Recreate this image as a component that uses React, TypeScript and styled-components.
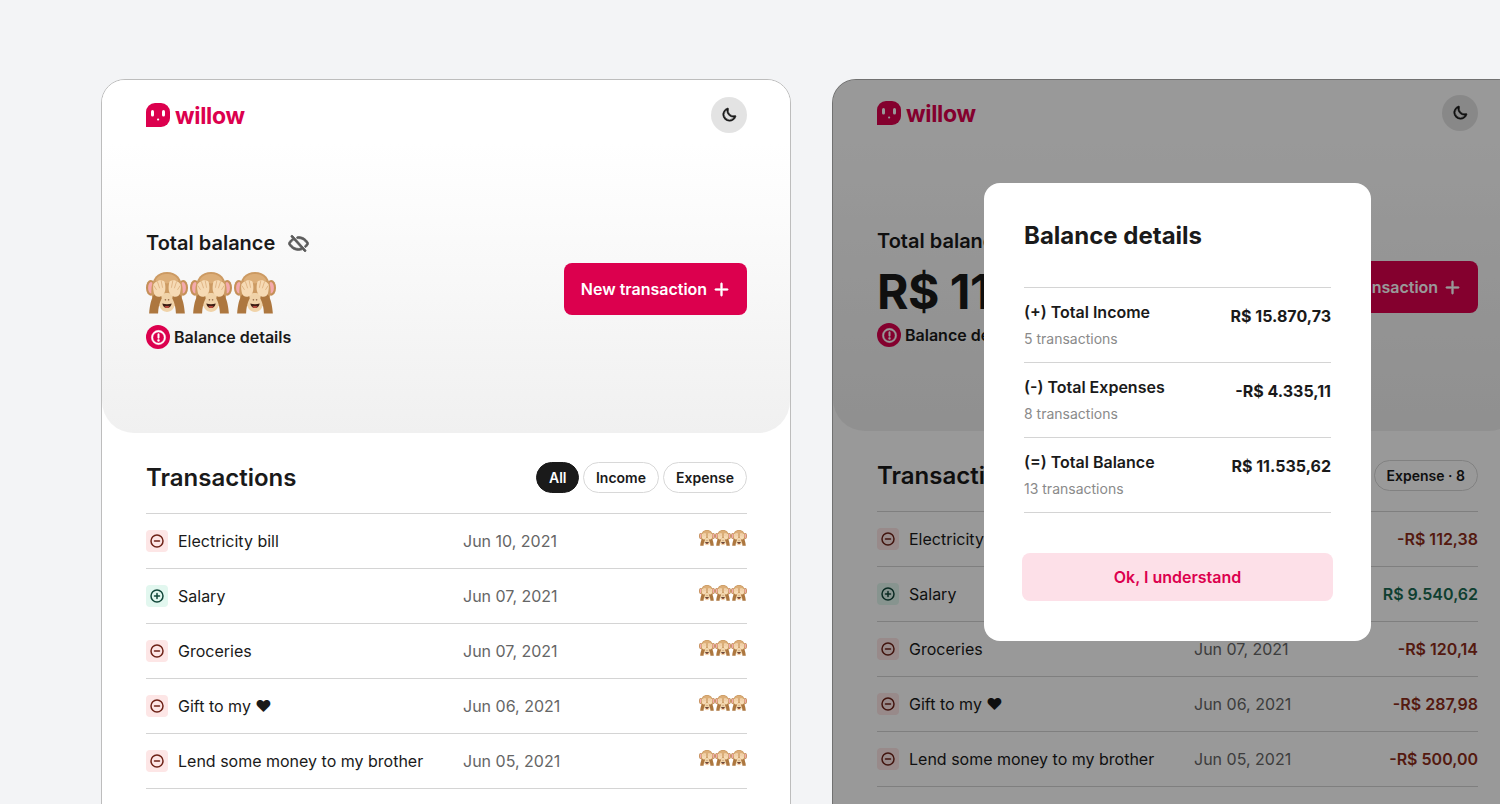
import styled, { createGlobalStyle } from "styled-components";
import {
  PiEyeSlashBold,
  PiMinusCircleBold,
  PiMoonBold,
  PiPlusBold,
  PiPlusCircleBold,
  PiWarningCircleBold,
} from "react-icons/pi";

const brand = "#dc004e";
const ink = "#1a1a1a";

const GlobalStyle = createGlobalStyle`
  html, body {
    margin: 0;
    height: 804px;
    overflow: hidden;
    background: #f3f4f6;
    font-family: Inter, "Liberation Sans", sans-serif;
    color: ${ink};
  }
`;

const Page = styled.div`
  display: flex;
  gap: 41px;
  height: 804px;
  padding: 79px 0 0 101px;
  box-sizing: border-box;
  overflow: hidden;
`;

const Screen = styled.section`
  position: relative;
  flex: none;
  box-sizing: border-box;
  width: 690px;
  height: 800px;
  background: #fff;
  border: 1px solid #bdbdbd;
  border-radius: 24px;
`;

const Hero = styled.div<{ $top: number }>`
  box-sizing: border-box;
  height: ${(p) => 353 - (17 - p.$top)}px;
  padding: ${(p) => p.$top}px 43px 0 44px;
  border-radius: 23px 23px 32px 32px;
  background: linear-gradient(180deg, #fff 18%, #f0f0f0 100%);
`;

const TopBar = styled.header`
  display: flex;
  align-items: center;
  justify-content: space-between;
  height: 36px;
`;

const Logo = styled.div`
  display: flex;
  align-items: center;
  gap: 5px;
  color: ${brand};
  font-size: 23px;
  font-weight: 700;
  letter-spacing: -0.3px;
  line-height: 24px;
  span {
    padding-top: 2px;
  }
`;

const RoundButton = styled.button`
  display: flex;
  align-items: center;
  justify-content: center;
  width: 36px;
  height: 36px;
  padding: 0 1px 0 0;
  border: 0;
  border-radius: 50%;
  background: #e3e3e3;
  color: ${ink};
  font-size: 16px;
  svg {
    stroke: currentColor;
    stroke-width: 8;
  }
`;

const BalanceRow = styled.div`
  display: flex;
  align-items: center;
  justify-content: space-between;
  margin-top: 98px;
`;

const BalanceColumn = styled.div`
  display: flex;
  flex-direction: column;
`;

const BalanceLabel = styled.div`
  display: flex;
  align-items: center;
  gap: 13px;
  height: 24px;
  font-size: 20px;
  font-weight: 600;
  line-height: 24px;
  svg {
    color: #5c5c5c;
    font-size: 21px;
    stroke: currentColor;
    stroke-width: 10;
  }
`;

const BalanceValue = styled.div`
  display: flex;
  align-items: center;
  gap: 2px;
  height: 42px;
  margin: 17px 0 11px;
  font-size: 48px;
  font-weight: 700;
  letter-spacing: -0.5px;
  white-space: nowrap;
`;

const DetailsLink = styled.div`
  display: flex;
  align-items: center;
  gap: 4px;
  height: 24px;
  font-size: 16px;
  font-weight: 600;
`;

const AlertDot = styled.span`
  display: flex;
  align-items: center;
  justify-content: center;
  width: 24px;
  height: 24px;
  border-radius: 50%;
  background: ${brand};
  color: #fff;
  font-size: 17px;
  svg {
    stroke: currentColor;
    stroke-width: 6;
  }
`;

const PrimaryButton = styled.button`
  display: flex;
  align-items: center;
  justify-content: center;
  gap: 6px;
  width: 183px;
  height: 52px;
  margin-bottom: 2px;
  border: 0;
  border-radius: 8px;
  background: ${brand};
  color: #fff;
  font: 600 16px Inter, sans-serif;
  white-space: nowrap;
  svg {
    font-size: 17px;
    stroke: currentColor;
    stroke-width: 10;
  }
`;

const Transactions = styled.div`
  padding: 29px 43px 0 44px;
`;

const SectionHead = styled.div`
  display: flex;
  align-items: center;
  justify-content: space-between;
  height: 31px;
  margin-bottom: 20px;
`;

const SectionTitle = styled.h2`
  margin: 0;
  font-size: 24px;
  font-weight: 620;
`;

const Pills = styled.div`
  display: flex;
  gap: 4px;
`;

const Pill = styled.span<{ $active?: boolean }>`
  display: flex;
  align-items: center;
  box-sizing: border-box;
  height: 31px;
  padding: 0 ${(p) => (p.$active ? 11.5 : 12)}px;
  border: 1px solid ${(p) => (p.$active ? ink : "#d8d8d8")};
  border-radius: 16px;
  background: ${(p) => (p.$active ? ink : "transparent")};
  color: ${(p) => (p.$active ? "#fff" : ink)};
  font-size: 14px;
  font-weight: 600;
  white-space: nowrap;
`;

const List = styled.div`
  border-top: 1px solid #d4d4d4;
`;

const Row = styled.div`
  display: grid;
  grid-template-columns: 317px 1fr auto;
  align-items: center;
  box-sizing: border-box;
  height: 55px;
  border-bottom: 1px solid #d4d4d4;
  font-size: 16px;
`;

const RowName = styled.div`
  display: flex;
  align-items: center;
  gap: 10px;
  white-space: nowrap;
`;

const TypeIcon = styled.span<{ $income: boolean }>`
  display: flex;
  align-items: center;
  justify-content: center;
  width: 22px;
  height: 22px;
  border-radius: 4px;
  background: ${(p) => (p.$income ? "#e2f7ef" : "#fde6e6")};
  color: ${(p) => (p.$income ? "#12473a" : "#6e2217")};
  font-size: 16px;
`;

const RowDate = styled.span`
  color: #666;
`;

const RowAmount = styled.span<{ $income: boolean }>`
  color: ${(p) => (p.$income ? "#1a6a52" : "#8c2c1a")};
  font-weight: 620;
`;

const HiddenAmount = styled.span`
  display: flex;
  margin-top: -6px;
`;

const Overlay = styled.div`
  position: absolute;
  inset: -1px;
  border-radius: 24px;
  background: rgba(0, 0, 0, 0.4);
`;

const Modal = styled.div`
  position: absolute;
  top: 103px;
  left: 151px;
  box-sizing: border-box;
  width: 387px;
  height: 458px;
  padding: 37px 40px 0;
  border-radius: 16px;
  background: #fff;
`;

const ModalTitle = styled.h3`
  margin: 0 0 35px;
  font-size: 24px;
  font-weight: 650;
  line-height: 32px;
`;

const Summary = styled.div`
  border-top: 1px solid #d4d4d4;
`;

const SummaryRow = styled.div`
  display: flex;
  align-items: flex-start;
  justify-content: space-between;
  box-sizing: border-box;
  height: 75px;
  padding-top: 14px;
  border-bottom: 1px solid #d4d4d4;
`;

const SummaryLabel = styled.div`
  font-size: 16px;
  font-weight: 600;
  line-height: 20px;
`;

const SummaryCount = styled.div`
  margin-top: 8px;
  color: #8a8a8a;
  font-size: 14px;
  line-height: 18px;
`;

const SummaryValue = styled.div`
  padding-top: 4px;
  font-size: 16px;
  font-weight: 700;
  line-height: 20px;
`;

const SoftButton = styled.button`
  display: block;
  width: 311px;
  height: 48px;
  margin: 40px 0 0 -2px;
  border: 0;
  border-radius: 8px;
  background: #fde0e8;
  color: ${brand};
  font: 600 16px Inter, sans-serif;
`;

function Monkey({ size }: { size: number }) {
  return (
    <svg width={size} height={size} viewBox="0 0 40 40" style={{ flex: "none" }}>
      <ellipse cx="4.500" cy="15" rx="4.500" ry="7.500" fill="#c59058" />
      <ellipse cx="35.500" cy="15" rx="4.500" ry="7.500" fill="#c59058" />
      <ellipse cx="4.800" cy="15" rx="2.800" ry="5.500" fill="#f4a9ad" />
      <ellipse cx="35.200" cy="15" rx="2.800" ry="5.500" fill="#f4a9ad" />
      <path d="M5 19C5 6 11 0 20 0s15 6 15 19c0 8-6 15-15 15S5 27 5 19z" fill="#cc9a62" />
      <path d="M9 8C12 3 16 2 20 2s8 1 11 6c-4 2-8 2-11 3-3-1-7-1-11-3z" fill="#dcae78" />
      <path d="M12 25c2-4 5-5 8-5s6 1 8 5c1 6-2 13-8 13s-9-7-8-13z" fill="#f0d3a9" />
      <path d="M15.500 30c3 .8 6 .8 9 0-.6 3-2.400 4.300-4.500 4.300s-3.900-1.300-4.500-4.300z" fill="#3d1e14" />
      <path d="M17.500 32.800c1.500-.6 3.500-.6 5 0-.7 1-1.500 1.500-2.500 1.500s-1.800-.5-2.500-1.500z" fill="#b5483c" />
      <path d="M8 21C5 25 3.500 32 3 39.500h8.500c.2-5 1-9.500 3.500-14.500l-1-4z" fill="#ad773f" />
      <path d="M32 21c3 4 4.500 11 5 18.500h-8.500c-.2-5-1-9.500-3.500-14.500l1-4z" fill="#ad773f" />
      <path d="M7 12c1.500-2.500 3-3 4-3 .8-1.200 2.500-1.500 3.500-.8 1.500-.5 3 .3 3.300 1.600.7 3 .9 6 .4 8-.5 2.500-2.200 5-5 5.700-2.800.5-5-.7-5.600-3.200C7 17.500 6.500 14.500 7 12z" fill="#f6dab4" />
      <path d="M33 12c-1.500-2.500-3-3-4-3-.8-1.200-2.500-1.500-3.500-.8-1.500-.5-3 .3-3.300 1.600-.7 3-.9 6-.4 8 .5 2.500 2.200 5 5 5.700 2.800.5 5-.7 5.600-3.200.6-3 1.100-6 .6-8.300z" fill="#f6dab4" />
      <path d="M11 9.500l2 6M14.500 8.500l1.300 6.500M10 17l-2.500-4M29 9.500l-2 6M25.500 8.500l-1.300 6.500M30 17l2.500-4" stroke="#dcaf7e" strokeWidth=".8" fill="none" />
      <ellipse cx="18.500" cy="26.500" rx=".8" ry=".6" fill="#7a4a2a" />
      <ellipse cx="21.500" cy="26.500" rx=".8" ry=".6" fill="#7a4a2a" />
    </svg>
  );
}

function WillowMark() {
  return (
    <svg width="24" height="24" viewBox="0 0 24 24">
      <path
        d="M0 9a9 9 0 0 1 9-9h6a9 9 0 0 1 9 9v6a9 9 0 0 1-9 9H0V9z"
        fill={brand}
      />
      <rect x="5" y="7" width="3" height="6.500" rx="1.500" fill="#fff" />
      <rect x="16" y="7" width="3" height="6.500" rx="1.500" fill="#fff" />
      <rect x="11" y="15.500" width="2.200" height="2" rx="1" fill="#fff" />
    </svg>
  );
}

type Tx = { name: string; date: string; amount: string; income?: boolean };

const transactions: Tx[] = [
  { name: "Electricity bill", date: "Jun 10, 2021", amount: "-R$ 112,38" },
  { name: "Salary", date: "Jun 07, 2021", amount: "R$ 9.540,62", income: true },
  { name: "Groceries", date: "Jun 07, 2021", amount: "-R$ 120,14" },
  { name: "Gift to my ❤", date: "Jun 06, 2021", amount: "-R$ 287,98" },
  {
    name: "Lend some money to my brother",
    date: "Jun 05, 2021",
    amount: "-R$ 500,00",
  },
];

const summary = [
  { label: "(+) Total Income", count: "5 transactions", value: "R$ 15.870,73" },
  { label: "(-) Total Expenses", count: "8 transactions", value: "-R$ 4.335,11" },
  { label: "(=) Total Balance", count: "13 transactions", value: "R$ 11.535,62" },
];

function BalanceDetailsModal() {
  return (
    <Modal>
      <ModalTitle>Balance details</ModalTitle>
      <Summary>
        {summary.map((item) => (
          <SummaryRow key={item.label}>
            <div>
              <SummaryLabel>{item.label}</SummaryLabel>
              <SummaryCount>{item.count}</SummaryCount>
            </div>
            <SummaryValue>{item.value}</SummaryValue>
          </SummaryRow>
        ))}
      </Summary>
      <SoftButton>Ok, I understand</SoftButton>
    </Modal>
  );
}

function WalletScreen({ revealed }: { revealed: boolean }) {
  return (
    <Screen>
      <Hero $top={revealed ? 15 : 17}>
        <TopBar>
          <Logo>
            <WillowMark />
            <span>willow</span>
          </Logo>
          <RoundButton>
            <PiMoonBold />
          </RoundButton>
        </TopBar>
        <BalanceRow>
          <BalanceColumn>
            <BalanceLabel>
              Total balance
              <PiEyeSlashBold />
            </BalanceLabel>
            <BalanceValue>
              {revealed ? (
                "R$ 11.535,62"
              ) : (
                <>
                  <Monkey size={42} />
                  <Monkey size={42} />
                  <Monkey size={42} />
                </>
              )}
            </BalanceValue>
            <DetailsLink>
              <AlertDot>
                <PiWarningCircleBold />
              </AlertDot>
              Balance details
            </DetailsLink>
          </BalanceColumn>
          <PrimaryButton>
            New transaction
            <PiPlusBold />
          </PrimaryButton>
        </BalanceRow>
      </Hero>
      <Transactions>
        <SectionHead>
          <SectionTitle>Transactions</SectionTitle>
          <Pills>
            <Pill $active>{revealed ? "All · 13" : "All"}</Pill>
            <Pill>{revealed ? "Income · 5" : "Income"}</Pill>
            <Pill>{revealed ? "Expense · 8" : "Expense"}</Pill>
          </Pills>
        </SectionHead>
        <List>
          {transactions.map((tx) => (
            <Row key={tx.name}>
              <RowName>
                <TypeIcon $income={!!tx.income}>
                  {tx.income ? <PiPlusCircleBold /> : <PiMinusCircleBold />}
                </TypeIcon>
                {tx.name}
              </RowName>
              <RowDate>{tx.date}</RowDate>
              {revealed ? (
                <RowAmount $income={!!tx.income}>{tx.amount}</RowAmount>
              ) : (
                <HiddenAmount>
                  <Monkey size={16} />
                  <Monkey size={16} />
                  <Monkey size={16} />
                </HiddenAmount>
              )}
            </Row>
          ))}
        </List>
      </Transactions>
      {revealed && (
        <>
          <Overlay />
          <BalanceDetailsModal />
        </>
      )}
    </Screen>
  );
}

export default function App() {
  return (
    <>
      <GlobalStyle />
      <Page>
        <WalletScreen revealed={false} />
        <WalletScreen revealed />
      </Page>
    </>
  );
}
